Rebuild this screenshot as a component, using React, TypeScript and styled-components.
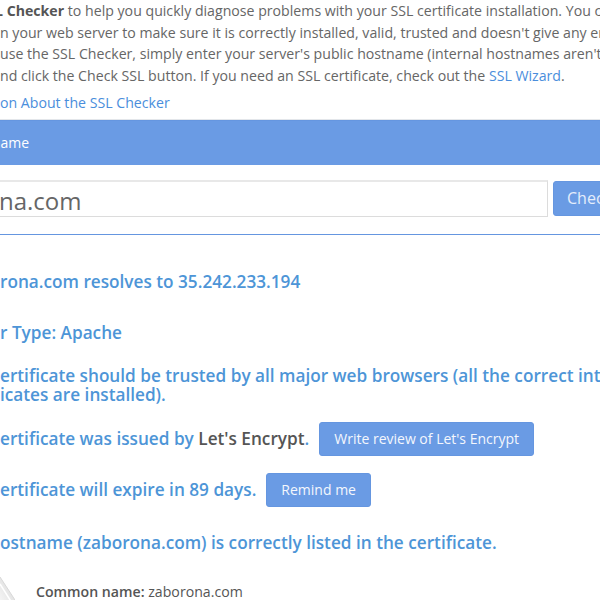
import React from "react";
import styled, { createGlobalStyle } from "styled-components";

const GlobalStyle = createGlobalStyle`
  html, body {
    margin: 0;
    padding: 0;
    background: #ffffff;
    overflow: hidden;
  }
  body {
    font-family: "Open Sans", "Liberation Sans", sans-serif;
    font-size: 14.15px;
    line-height: 21.5px;
    color: #666666;
  }
`;

const Page = styled.div`
  width: 600px;
  height: 600px;
  overflow: hidden;
`;

const Intro = styled.div`
  margin: 0;
`;

const IntroLine = styled.div<{ $indent?: number }>`
  white-space: nowrap;
  text-indent: ${(p) => p.$indent ?? 0}px;
`;

const Strong = styled.strong`
  font-weight: 700;
  color: #555555;
`;

const Link = styled.a`
  color: #4a8edc;
  text-decoration: none;
`;

const MoreLink = styled(Link)`
  display: block;
  margin-top: 6px;
  white-space: nowrap;
`;

const Panel = styled.section`
  margin: 6px -130px 0 -100px;
  border: 1px solid #6596e0;
  box-shadow: 0 -1px 0 #e3e6ea;
`;

const PanelHeader = styled.div`
  height: 44px;
  display: flex;
  align-items: center;
  padding: 0 15px;
  background: #6a9be4;
  color: #ffffff;
  font-size: 14px;
  line-height: 1.1;
  white-space: nowrap;
`;

const PanelBody = styled.div`
  display: flex;
  align-items: flex-start;
  gap: 5px;
  padding: 15px 15px 17px;
  background: #ffffff;
`;

const HostInput = styled.input`
  flex: 1;
  min-width: 0;
  box-sizing: border-box;
  height: 37px;
  padding: 3px 4px 0;
  border: 1px solid #dcdcdc;
  border-top: 2px solid #e8e8e8;
  border-radius: 0;
  background: #ffffff;
  color: #666666;
  font-family: "Open Sans", "Liberation Sans", sans-serif;
  font-size: 24px;
  outline: none;
`;

const CheckButton = styled.button`
  flex: none;
  width: 161px;
  height: 35px;
  margin-top: 1px;
  padding: 0 13px;
  text-align: left;
  border: 1px solid #6596e0;
  border-radius: 3px;
  background: #6a9be4;
  color: #e4edfb;
  font-family: "Open Sans", "Liberation Sans", sans-serif;
  font-size: 16px;
  white-space: nowrap;
`;

const ResultList = styled.div`
  display: flex;
  flex-direction: column;
  gap: 17px;
  margin-top: 30px;
`;

const Result = styled.div<{ $after?: number }>`
  display: flex;
  align-items: center;
  min-height: 34px;
  margin-bottom: ${(p) => p.$after ?? 0}px;
  font-size: 17.2px;
  font-weight: 600;
  line-height: 19.8px;
  color: #4d95d7;
  white-space: nowrap;
`;

const Issuer = styled.span`
  color: #555555;
`;

const ActionButton = styled.button`
  flex: none;
  box-sizing: border-box;
  height: 34px;
  margin-left: 10px;
  padding: 0 14px;
  border: 1px solid #6596e0;
  border-radius: 3px;
  background: #6a9be4;
  color: #f4f7fd;
  font-family: "Open Sans", "Liberation Sans", sans-serif;
  font-size: 14px;
  font-weight: 400;
  line-height: 20px;
  white-space: nowrap;
`;

const CertInfo = styled.div`
  display: flex;
  align-items: flex-start;
  margin-top: 21px;
  color: #555555;
  white-space: nowrap;
`;

const Curl = styled.svg`
  flex: none;
  margin-top: -4px;
  margin-right: 21px;
`;

const Label = styled.span`
  font-weight: 600;
`;

export default function App() {
  return (
    <Page>
      <GlobalStyle />
      <Intro>
        <IntroLine $indent={-5}>
          <Strong>L Checker</Strong> to help you quickly diagnose problems with your SSL
          certificate installation. You can verify the SSL certificate
        </IntroLine>
        <IntroLine>
          n your web server to make sure it is correctly installed, valid, trusted and
          doesn't give any errors to any of your users.
        </IntroLine>
        <IntroLine>
          use the SSL Checker, simply enter your server's public hostname (internal
          hostnames aren't supported) in the box below
        </IntroLine>
        <IntroLine>
          nd click the Check SSL button. If you need an SSL certificate, check out the{" "}
          <Link href="#">SSL Wizard</Link>.
        </IntroLine>
      </Intro>
      <MoreLink href="#">on About the SSL Checker</MoreLink>

      <Panel>
        <PanelHeader>Server Hostname</PanelHeader>
        <PanelBody>
          <HostInput readOnly value="zaborona.com" />
          <CheckButton>Check SSL</CheckButton>
        </PanelBody>
      </Panel>

      <ResultList>
        <Result>rona.com resolves to 35.242.233.194</Result>
        <Result $after={-1}>r Type: Apache</Result>
        <Result>
          ertificate should be trusted by all major web browsers (all the correct intermediate
          <br />
          icates are installed).
        </Result>
        <Result>
          ertificate was issued by&nbsp;<Issuer>Let's Encrypt</Issuer>.
          <ActionButton>Write review of Let's Encrypt</ActionButton>
        </Result>
        <Result $after={2}>
          ertificate will expire in 89 days.
          <ActionButton>Remind me</ActionButton>
        </Result>
        <Result>ostname (zaborona.com) is correctly listed in the certificate.</Result>
      </ResultList>

      <CertInfo>
        <Curl width="15" height="26" viewBox="0 0 15 26">
          <defs>
            <linearGradient id="curlFill" x1="1" y1="0" x2="0" y2="1">
              <stop offset="0" stopColor="#d6d6d6" />
              <stop offset="1" stopColor="#f6f6f6" />
            </linearGradient>
          </defs>
          <path d="M0 0 L15 23 L15 26 L0 26 Z" fill="url(#curlFill)" />
          <path d="M0 0 L15 23" stroke="#d8d8d8" strokeWidth="1" fill="none" />
          <path d="M0 7 L12 26" stroke="#ffffff" strokeWidth="1.5" fill="none" />
        </Curl>
        <span>
          <Label>Common name:</Label> zaborona.com
        </span>
      </CertInfo>
    </Page>
  );
}
